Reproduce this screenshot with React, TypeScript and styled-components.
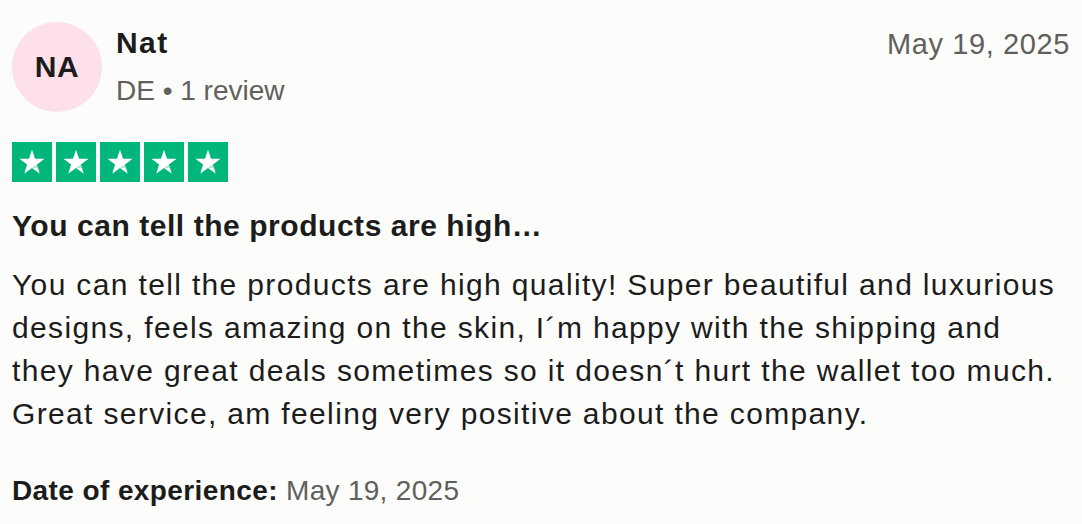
import React from "react";
import styled, {createGlobalStyle} from "styled-components";

const Global = createGlobalStyle`
  body {
    margin: 0;
    background: #fcfcfa;
    font-family: "Liberation Sans", Arial, sans-serif;
    color: #1c1c1c;
  }
`;

const Card = styled.article`
  padding: 22px 12px 0 12px;
  width: 1082px;
  box-sizing: border-box;
`;

const Header = styled.header`
  display: flex;
  align-items: flex-start;
`;

const Avatar = styled.div`
  width: 90px;
  height: 90px;
  border-radius: 50%;
  background: #fde0ea;
  display: flex;
  align-items: center;
  justify-content: center;
  font-weight: 700;
  font-size: 30px;
  letter-spacing: 0.5px;
  color: #1c1c1c;
  flex-shrink: 0;
`;

const Consumer = styled.div`
  margin-left: 14px;
  display: flex;
  flex-direction: column;
`;

const Name = styled.div`
  font-size: 30px;
  font-weight: 700;
  letter-spacing: 1.4px;
  line-height: 42px;
`;

const Meta = styled.div`
  font-size: 28px;
  color: #60605c;
  line-height: 36px;
  margin-top: 9px;
`;

const DateText = styled.time`
  margin-left: auto;
  font-size: 29px;
  letter-spacing: 0.6px;
  color: #60605c;
  line-height: 44px;
`;

const Stars = styled.div`
  display: flex;
  gap: 4px;
  margin-top: 30px;
`;

const StarBox = styled.span`
  width: 40px;
  height: 40px;
  background: #00b67a;
  display: flex;
  align-items: center;
  justify-content: center;
`;

const Title = styled.h2`
  margin: 24px 0 0 0;
  font-size: 30px;
  font-weight: 700;
  letter-spacing: 0.55px;
  line-height: 40px;
`;

const Body = styled.p`
  margin: 17px 0 0 0;
  font-size: 30px;
  letter-spacing: 1.35px;
  line-height: 43px;
`;

const Experience = styled.p`
  margin: 38px 0 0 0;
  font-size: 28px;
  letter-spacing: 0.3px;
  line-height: 36px;
  color: #60605c;
  > strong {
    color: #1c1c1c;
    letter-spacing: 0.4px;
  }
`;

function Star() {
    return (
        <StarBox>
            <svg width="28" height="28" viewBox="0 0 24 24">
                <polygon fill="#fff" points="12,1.5 14.6,9.3 22.8,9.3 16.2,14.2 18.7,22 12,17.2 5.3,22 7.8,14.2 1.2,9.3 9.4,9.3"/>
                <polygon fill="#00b67a" opacity="0.35" points="16.2,14.2 17.1,17 12,17.2"/>
            </svg>
        </StarBox>
    );
}

function App() {
    return (
        <Card>
            <Global/>
            <Header>
                <Avatar>NA</Avatar>
                <Consumer>
                    <Name>Nat</Name>
                    <Meta>DE • 1 review</Meta>
                </Consumer>
                <DateText>May 19, 2025</DateText>
            </Header>
            <Stars>
                {[0, 1, 2, 3, 4].map(i => <Star key={i}/>)}
            </Stars>
            <Title>You can tell the products are high…</Title>
            <Body>
                You can tell the products are high quality! Super beautiful and luxurious designs, feels amazing on the skin, I´m happy with the shipping and they have great deals sometimes so it doesn´t hurt the wallet too much. Great service, am feeling very positive about the company.
            </Body>
            <Experience><strong>Date of experience:</strong> May 19, 2025</Experience>
        </Card>
    );
}

export default App;
